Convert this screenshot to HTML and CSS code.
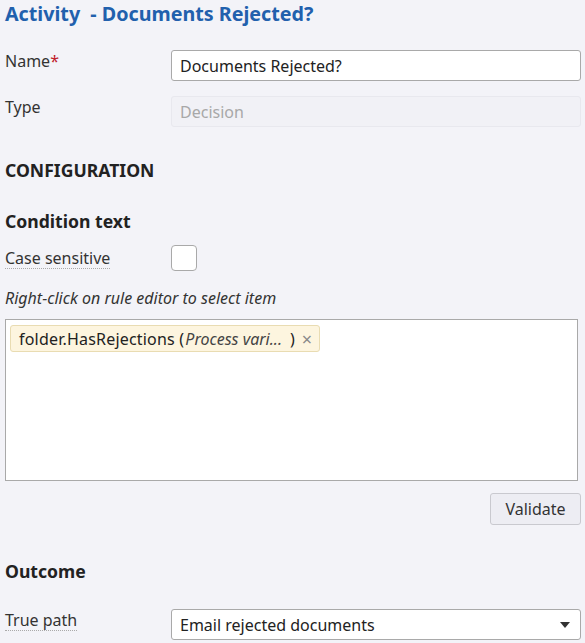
FILE: index.html
```html
<!DOCTYPE html>
<html lang="en">
<head>
<meta charset="utf-8">
<title>Activity - Documents Rejected?</title>
<link rel="stylesheet" href="styles.css">
</head>
<body>
<main class="panel">
  <h1 class="title">Activity&nbsp; - Documents Rejected?</h1>

  <div class="row row-name">
    <label class="label">Name<span class="req">*</span></label>
    <input class="input" type="text" value="Documents Rejected?">
  </div>
  <div class="row row-type">
    <label class="label">Type</label>
    <input class="input input-disabled" type="text" value="Decision" disabled>
  </div>

  <h2 class="section">CONFIGURATION</h2>

  <h3 class="subsection">Condition text</h3>
  <div class="row row-case">
    <span class="label label-hint">Case sensitive</span>
    <span class="checkbox"></span>
  </div>
  <p class="hint">Right-click on rule editor to select item</p>

  <div class="editor">
    <span class="token"><span class="token-name">folder.HasRejections (</span><em class="token-type">Process vari...</em>)<span class="token-x">×</span></span>
  </div>

  <div class="actions">
    <button class="btn" type="button">Validate</button>
  </div>

  <h3 class="subsection outcome">Outcome</h3>
  <div class="row row-path">
    <span class="label label-hint">True path</span>
    <div class="select">
      <span>Email rejected documents</span>
      <svg class="caret" width="10" height="6" viewBox="0 0 10 6"><path d="M0 0H10L5 6Z" fill="#333"/></svg>
    </div>
  </div>
</main>
</body>
</html>
```
FILE: styles.css
```css
html, body {
  margin: 0;
  padding: 0;
  background: #f3f3f8;
}

body {
  font-family: "Noto Sans", "Open Sans", sans-serif;
  font-size: 16px;
  color: #222;
}

.panel {
  padding: 0 4px 0 5px;
}

.title {
  margin: 0;
  padding-top: 3px;
  font-size: 19.7px;
  line-height: 22px;
  font-weight: 700;
  color: #2160ad;
}

.row {
  display: grid;
  grid-template-columns: 166px 1fr;
  align-items: start;
}

.row-name { margin-top: 25px; }
.row-type { margin-top: 15px; }

.label {
  line-height: 22px;
  color: #333;
  justify-self: start;
}

.req { color: #c0202a; }

.input {
  box-sizing: border-box;
  height: 31px;
  margin: 0;
  padding: 0 8px;
  font: inherit;
  color: #222;
  background: #fff;
  border: 1px solid #a9a9a9;
  border-radius: 3px;
  width: 100%;
}

.input-disabled {
  background: #f1f1f6;
  border-color: #e8e8ee;
  color: #a8a8a8;
}

.section {
  margin: 32px 0 0;
  font-size: 17.6px;
  line-height: 22px;
  font-weight: 700;
  color: #222;
}

.subsection {
  margin: 29px 0 0;
  font-size: 17.6px;
  line-height: 22px;
  font-weight: 700;
  color: #222;
}

.row-case { margin-top: 13px; align-items: center; }

.label-hint {
  border-bottom: 1px dotted #aaa;
  line-height: 20px;
}

.checkbox {
  box-sizing: border-box;
  width: 26px;
  height: 26px;
  background: #fff;
  border: 1px solid #a9a9a9;
  border-radius: 4px;
}

.hint {
  margin: 16px 0 0;
  font-style: italic;
  line-height: 22px;
  color: #333;
}

.editor {
  box-sizing: border-box;
  margin-top: 10px;
  width: 573px;
  height: 162px;
  background: #fff;
  border: 1px solid #a9a9a9;
  padding: 5px 4px;
}

.token {
  display: inline-flex;
  align-items: center;
  box-sizing: border-box;
  height: 27px;
  padding: 0 7px 0 8px;
  background: #fdf5df;
  border: 1px solid #e9dcb2;
  border-radius: 3px;
  color: #222;
  white-space: pre;
}

.token-name { letter-spacing: 0.2px; }

.token-type {
  font-style: italic;
  color: #444;
  margin-left: 1px;
  padding-right: 8px;
}

.token-x {
  margin-left: 7px;
  color: #888;
  font-size: 18px;
}

.actions {
  display: flex;
  justify-content: flex-end;
  margin-top: 12px;
}

.btn {
  box-sizing: border-box;
  width: 91px;
  height: 32px;
  font: inherit;
  color: #333;
  background: #ededf3;
  border: 1px solid #c9c9cf;
  border-radius: 3px;
}

.outcome { margin-top: 35px; }

.row-path { margin-top: 27px; }

.row-path .label { margin-top: 1px; }

.select {
  box-sizing: border-box;
  height: 31px;
  display: flex;
  align-items: center;
  justify-content: space-between;
  padding: 0 8px;
  background: #fff;
  border: 1px solid #a9a9a9;
  border-radius: 3px;
}

.caret { margin-right: 2px; }
```
